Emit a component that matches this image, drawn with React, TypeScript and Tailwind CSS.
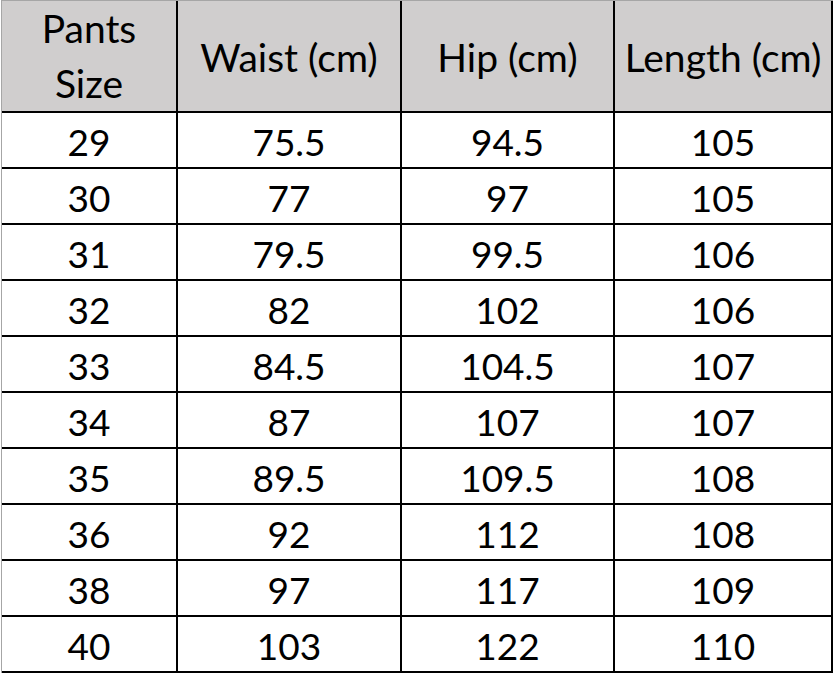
import React from "react";

const rows = [
  ["29", "75.5", "94.5", "105"],
  ["30", "77", "97", "105"],
  ["31", "79.5", "99.5", "106"],
  ["32", "82", "102", "106"],
  ["33", "84.5", "104.5", "107"],
  ["34", "87", "107", "107"],
  ["35", "89.5", "109.5", "108"],
  ["36", "92", "112", "108"],
  ["38", "97", "117", "109"],
  ["40", "103", "122", "110"],
];

export default function App() {
  return (
    <div className="w-[838px] h-[675px] bg-white" style={{ fontFamily: "Lato, 'Open Sans', sans-serif" }}>
      <div className="ml-[1px] w-[832px] border-t border-l border-t-[#a6a6a6] border-l-[#a6a6a6] bg-black">
        <div className="grid grid-cols-[174px_222px_211px_216px] grid-rows-[110px_repeat(10,54px)] gap-[2px] pr-[2px] pb-[2px] text-[37px] text-black leading-none">
          <div className="bg-[#d0cece] flex flex-col items-center justify-center text-[39px] leading-[55px]">
            <span>Pants</span>
            <span>Size</span>
          </div>
          <div className="bg-[#d0cece] flex items-center justify-center text-[39px] pt-[3px]">Waist (cm)</div>
          <div className="bg-[#d0cece] flex items-center justify-center text-[39px] pt-[3px]">Hip (cm)</div>
          <div className="bg-[#d0cece] flex items-center justify-center text-[39px] pt-[3px]">Length (cm)</div>
          {rows.map((r, i) =>
            r.map((c, j) => (
              <div key={i + "-" + j} className="bg-white flex items-center justify-center pt-[3px]">
                {c}
              </div>
            ))
          )}
        </div>
      </div>
    </div>
  );
}
